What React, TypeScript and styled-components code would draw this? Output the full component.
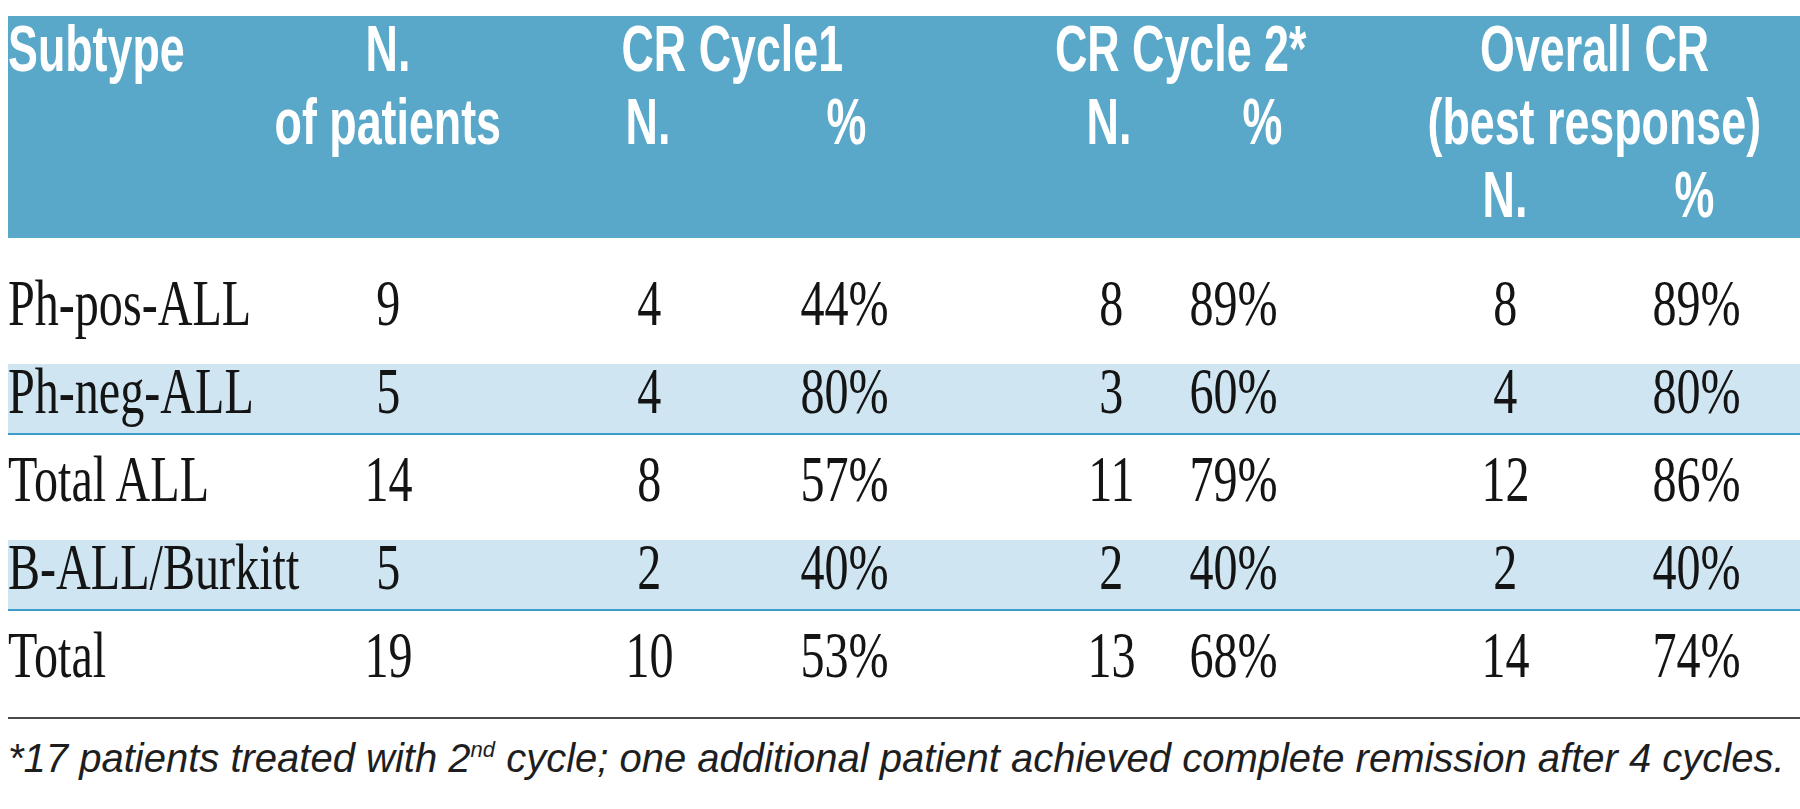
import styled, { createGlobalStyle } from "styled-components";

const GlobalStyle = createGlobalStyle`
  html, body {
    margin: 0;
    padding: 0;
    background: #ffffff;
    overflow: hidden;
  }
`;

// label column, then a slot for every value with spacer tracks between them
const bodyColumns =
  "320px 120px 141px 120px 76px 120px 146px 120px 3px 120px 151px 120px 72px 120px";
const headColumns =
  "320px 120px 120px 160px 68px 100px 153px 120px 43px 100px 133px 120px 79px 100px";

const Page = styled.div`
  width: 1792px;
  padding: 16px 0 0 8px;
`;

const Header = styled.div`
  display: grid;
  grid-template-columns: ${headColumns};
  justify-items: center;
  row-gap: 7px;
  padding-bottom: 10px;
  background-color: #5aa8c9;
  color: #ffffff;
  font-family: "Liberation Sans", Arial, sans-serif;
  font-weight: 700;
  font-size: 64px;
  line-height: 66px;
`;

const HeadCell = styled.div<{ $col: string; $row: number; $left?: boolean }>`
  grid-column: ${(p) => p.$col};
  grid-row: ${(p) => p.$row};
  justify-self: ${(p) => (p.$left ? "start" : "center")};
  white-space: nowrap;
`;

/* the original typeface is a condensed cut, so the glyphs are narrowed */
const Narrow = styled.span<{ $k: number; $left?: boolean }>`
  display: inline-block;
  transform: scaleX(${(p) => p.$k});
  transform-origin: ${(p) => (p.$left ? "left" : "center")} center;
`;

const Body = styled.div`
  display: flex;
  flex-direction: column;
  gap: 17px;
  padding: 38px 0 18px;
  border-bottom: 2px solid #4a4a4a;
`;

const Row = styled.div<{ $shade?: boolean }>`
  display: grid;
  grid-template-columns: ${bodyColumns};
  justify-items: center;
  height: 71px;
  box-sizing: border-box;
  background-color: ${(p) => (p.$shade ? "#cfe5f2" : "transparent")};
  border-bottom: 2px solid ${(p) => (p.$shade ? "#3d9cc8" : "transparent")};
  color: #141414;
  font-family: "Liberation Serif", "Times New Roman", serif;
  font-size: 65px;
  line-height: 55px;
`;

const Cell = styled.div<{ $col: number; $left?: boolean }>`
  grid-column: ${(p) => p.$col};
  justify-self: ${(p) => (p.$left ? "start" : "center")};
  white-space: nowrap;
`;

const Note = styled.p`
  margin: 17px 0 0;
  color: #1e1e1e;
  font-family: "Liberation Sans", Arial, sans-serif;
  font-style: italic;
  font-size: 40px;
  line-height: 45px;
  white-space: nowrap;
`;

const Sup = styled.sup`
  font-size: 22px;
  vertical-align: 15px;
  line-height: 0;
`;

const rows = [
  ["Ph-pos-ALL", "9", "4", "44%", "8", "89%", "8", "89%"],
  ["Ph-neg-ALL", "5", "4", "80%", "3", "60%", "4", "80%"],
  ["Total ALL", "14", "8", "57%", "11", "79%", "12", "86%"],
  ["B-ALL/Burkitt", "5", "2", "40%", "2", "40%", "2", "40%"],
  ["Total", "19", "10", "53%", "13", "68%", "14", "74%"],
];

// grid column of each value in a body row
const slots = [1, 2, 4, 6, 8, 10, 12, 14];

const headCells: { text: string; col: string; row: number; left?: boolean }[] = [
  { text: "Subtype", col: "1", row: 1, left: true },
  { text: "N.", col: "2", row: 1 },
  { text: "CR Cycle1", col: "4 / 7", row: 1 },
  { text: "CR Cycle 2*", col: "8 / 11", row: 1 },
  { text: "Overall CR", col: "12 / 15", row: 1 },
  { text: "of patients", col: "2", row: 2 },
  { text: "N.", col: "4", row: 2 },
  { text: "%", col: "6", row: 2 },
  { text: "N.", col: "8", row: 2 },
  { text: "%", col: "10", row: 2 },
  { text: "(best response)", col: "12 / 15", row: 2 },
  { text: "N.", col: "12", row: 3 },
  { text: "%", col: "14", row: 3 },
];

const App = () => {
  return (
    <Page>
      <GlobalStyle />
      <Header>
        {headCells.map((c, i) => (
          <HeadCell key={i} $col={c.col} $row={c.row} $left={c.left}>
            <Narrow $k={0.7} $left={c.left}>
              {c.text}
            </Narrow>
          </HeadCell>
        ))}
      </Header>

      <Body>
        {rows.map((r, i) => (
          <Row key={r[0]} $shade={i % 2 === 1}>
            {r.map((v, j) => (
              <Cell key={j} $col={slots[j]} $left={j === 0}>
                <Narrow $k={0.74} $left={j === 0}>
                  {v}
                </Narrow>
              </Cell>
            ))}
          </Row>
        ))}
      </Body>

      <Note>
        *17 patients treated with 2<Sup>nd</Sup> cycle; one additional patient
        achieved complete remission after 4 cycles.
      </Note>
    </Page>
  );
};

export default App;
